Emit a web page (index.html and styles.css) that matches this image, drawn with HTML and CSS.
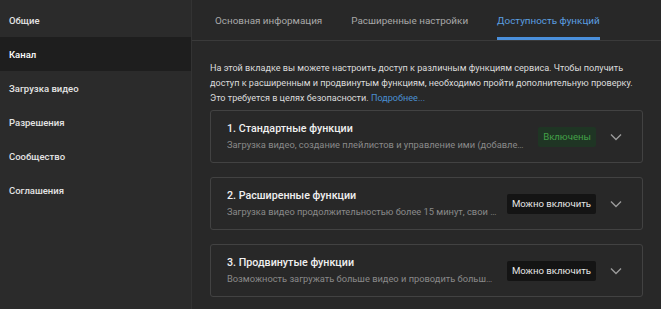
FILE: index.html
```html
<!DOCTYPE html>
<html lang="ru">

<head>
  <meta charset="UTF-8">
  <meta name="viewport" content="width=device-width, initial-scale=1.0">
  <title>Настройки канала</title>
  <link rel="stylesheet" href="styles.css">
</head>

<body>
  <nav class="sidebar">
    <div class="nav-item">Общие</div>
    <div class="nav-item active">Канал</div>
    <div class="nav-item">Загрузка видео</div>
    <div class="nav-item">Разрешения</div>
    <div class="nav-item">Сообщество</div>
    <div class="nav-item">Соглашения</div>
  </nav>

  <main class="content">
    <div class="tabs">
      <div class="tab">Основная информация</div>
      <div class="tab">Расширенные настройки</div>
      <div class="tab active">Доступность функций</div>
    </div>

    <div class="panel">
      <p class="intro">
        На этой вкладке вы можете настроить доступ к различным функциям сервиса. Чтобы получить
        доступ к расширенным и продвинутым функциям, необходимо пройти дополнительную проверку.
        Это требуется в целях безопасности. <a href="#" class="link">Подробнее...</a>
      </p>

      <div class="feature">
        <div class="feature-text">
          <div class="feature-title">1. Стандартные функции</div>
          <div class="feature-desc">Загрузка видео, создание плейлистов и управление ими (добавление и удаление видео)</div>
        </div>
        <span class="badge on">Включены</span>
        <svg class="chevron" width="12" height="8" viewBox="0 0 12 8"><path d="M1 1.5l5 5 5-5" fill="none" stroke="#9a9a9a" stroke-width="1.4"/></svg>
      </div>

      <div class="feature">
        <div class="feature-text">
          <div class="feature-title">2. Расширенные функции</div>
          <div class="feature-desc">Загрузка видео продолжительностью более 15 минут, свои значки, трансляции</div>
        </div>
        <span class="badge">Можно включить</span>
        <svg class="chevron" width="12" height="8" viewBox="0 0 12 8"><path d="M1 1.5l5 5 5-5" fill="none" stroke="#9a9a9a" stroke-width="1.4"/></svg>
      </div>

      <div class="feature">
        <div class="feature-text">
          <div class="feature-title">3. Продвинутые функции</div>
          <div class="feature-desc">Возможность загружать больше видео и проводить больше трансляций</div>
        </div>
        <span class="badge">Можно включить</span>
        <svg class="chevron" width="12" height="8" viewBox="0 0 12 8"><path d="M1 1.5l5 5 5-5" fill="none" stroke="#9a9a9a" stroke-width="1.4"/></svg>
      </div>
    </div>
  </main>
</body>

</html>
```

FILE: styles.css
```css
body {
  font-family: Roboto, "Noto Sans", Arial, sans-serif;
  background-color: #282828;
  color: #e8e8e8;
  margin: 0;
  padding: 0;
  display: flex;
  min-height: 100vh;
  overflow: hidden;
}

.sidebar {
  width: 191px;
  flex-shrink: 0;
  padding-top: 3px;
  background-color: #2b2b2b;
  border-right: 1px solid #333;
}

.nav-item {
  height: 34px;
  display: flex;
  align-items: center;
  padding-left: 9px;
  font-size: 9.5px;
  font-weight: 500;
  color: #e4e4e4;
}

.nav-item.active {
  background-color: #1e1e1e;
  color: #fff;
}

.content {
  flex: 1;
  min-width: 0;
}

.tabs {
  display: flex;
  gap: 29px;
  height: 40px;
  padding-left: 23px;
  border-bottom: 1px solid #3a3a3a;
}

.tab {
  display: flex;
  align-items: center;
  font-size: 9.9px;
  color: #a8a8a8;
  border-bottom: 3px solid transparent;
  padding-top: 3px;
}

.tab.active {
  color: #5b9fe0;
  border-bottom-color: #4a8fdb;
}

.panel {
  padding: 0 18px;
}

.intro {
  margin: 20px 0 4px;
  font-size: 9.1px;
  line-height: 15px;
  color: #dcdcdc;
}

.link {
  color: #4a8fd0;
  text-decoration: none;
}

.feature {
  display: flex;
  align-items: center;
  height: 51px;
  padding: 0 20px 0 16px;
  margin-bottom: 14px;
  border: 1px solid #424242;
  border-radius: 3px;
}

.feature-text {
  flex: 1;
  min-width: 0;
  margin-right: 10px;
}

.feature-title {
  font-size: 10.7px;
  font-weight: 500;
  color: #f0f0f0;
  line-height: 15px;
}

.feature-desc {
  font-size: 9.3px;
  color: #8a8a8a;
  line-height: 15px;
  margin-top: 1px;
  white-space: nowrap;
  overflow: hidden;
  text-overflow: ellipsis;
}

.badge {
  flex-shrink: 0;
  height: 20px;
  line-height: 20px;
  padding: 0 5px;
  font-size: 9.6px;
  background-color: #141414;
  color: #e6e6e6;
  border-radius: 2px;
}

.badge.on {
  background-color: #1f3524;
  color: #43a047;
}

.chevron {
  flex-shrink: 0;
  margin-left: 14px;
}
```
